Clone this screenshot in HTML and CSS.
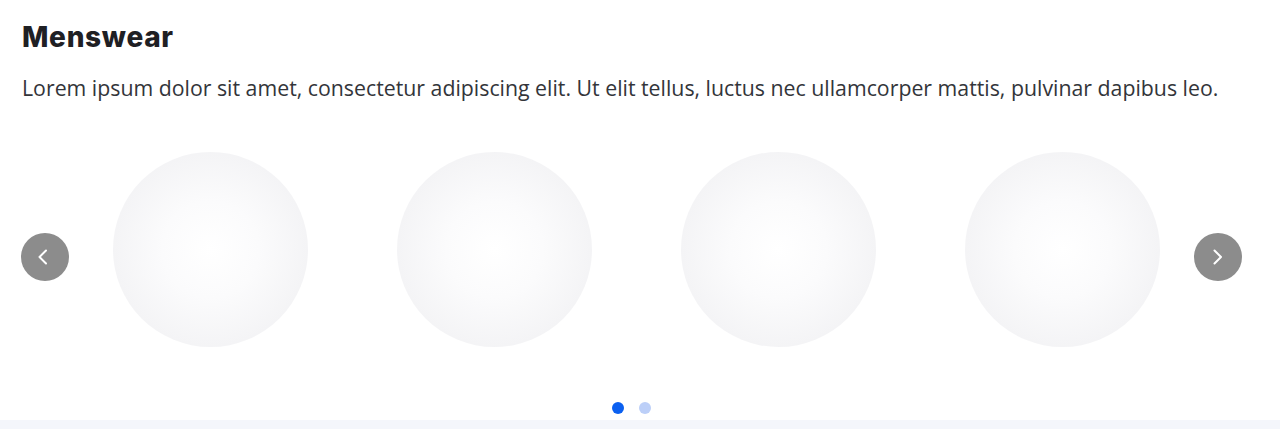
FILE: index.html
```html
<!DOCTYPE html>
<html>
<head>
<meta charset="utf-8">
<link rel="stylesheet" href="styles.css">
</head>
<body>
<section class="section">
  <h2 class="title">Menswear</h2>
  <p class="lead">Lorem ipsum dolor sit amet, consectetur adipiscing elit. Ut elit tellus, luctus nec ullamcorper mattis, pulvinar dapibus leo.</p>
  <div class="carousel">
    <button class="arrow arrow-prev" aria-label="Previous">
      <svg viewBox="0 0 16 16" width="16" height="16"><path d="M9 1.5 L2.5 8 L9 14.5" fill="none" stroke="#fff" stroke-width="2" stroke-linecap="round" stroke-linejoin="round"/></svg>
    </button>
    <div class="track">
      <div class="slide"><div class="circle"></div></div>
      <div class="slide"><div class="circle"></div></div>
      <div class="slide"><div class="circle"></div></div>
      <div class="slide"><div class="circle"></div></div>
    </div>
    <button class="arrow arrow-next" aria-label="Next">
      <svg viewBox="0 0 16 16" width="16" height="16"><path d="M4.5 1.5 L11 8 L4.5 14.5" fill="none" stroke="#fff" stroke-width="2" stroke-linecap="round" stroke-linejoin="round"/></svg>
    </button>
  </div>
  <div class="dots">
    <span class="dot active"></span>
    <span class="dot"></span>
  </div>
</section>
<div class="footer-strip"></div>
</body>
</html>
```
FILE: styles.css
```css
html, body {
  margin: 0;
  padding: 0;
  background: #fff;
  overflow: hidden;
}
.section {
  padding: 21px 22px 0 22px;
  height: 420px;
  box-sizing: border-box;
}
.title {
  margin: 0;
  font-family: Inter, "Liberation Sans", sans-serif;
  font-weight: 800;
  font-size: 28px;
  line-height: 32px;
  color: #1f2024;
  letter-spacing: 0.7px;
}
.lead {
  margin: 20px 0 0 0;
  font-family: "Open Sans", sans-serif;
  font-size: 21.3px;
  line-height: 30px;
  color: #33353a;
  white-space: nowrap;
}
.carousel {
  position: relative;
  margin-top: 49px;
  height: 195px;
}
.track {
  display: flex;
  padding-left: 46px;
}
.slide {
  width: 284px;
  display: flex;
  justify-content: center;
}
.circle {
  width: 195px;
  height: 195px;
  border-radius: 50%;
  background: radial-gradient(circle at 50% 50%, #ffffff 0%, #fbfbfc 35%, #f3f3f5 75%, #ececee 100%);
}
.arrow {
  position: absolute;
  top: 81px;
  width: 48px;
  height: 48px;
  border-radius: 50%;
  border: 0;
  background: #8c8c8c;
  display: flex;
  align-items: center;
  justify-content: center;
  padding: 0;
}
.arrow-prev { left: -1px; }
.arrow-next { right: 16px; }
.dots {
  display: flex;
  justify-content: center;
  gap: 15px;
  margin-top: 55px;
  padding-right: 18px;
}
.dot {
  width: 12px;
  height: 12px;
  border-radius: 50%;
  background: #bccff8;
}
.dot.active {
  background: #0b60f0;
}
.footer-strip {
  height: 9px;
  background: #f4f6fb;
}
```
